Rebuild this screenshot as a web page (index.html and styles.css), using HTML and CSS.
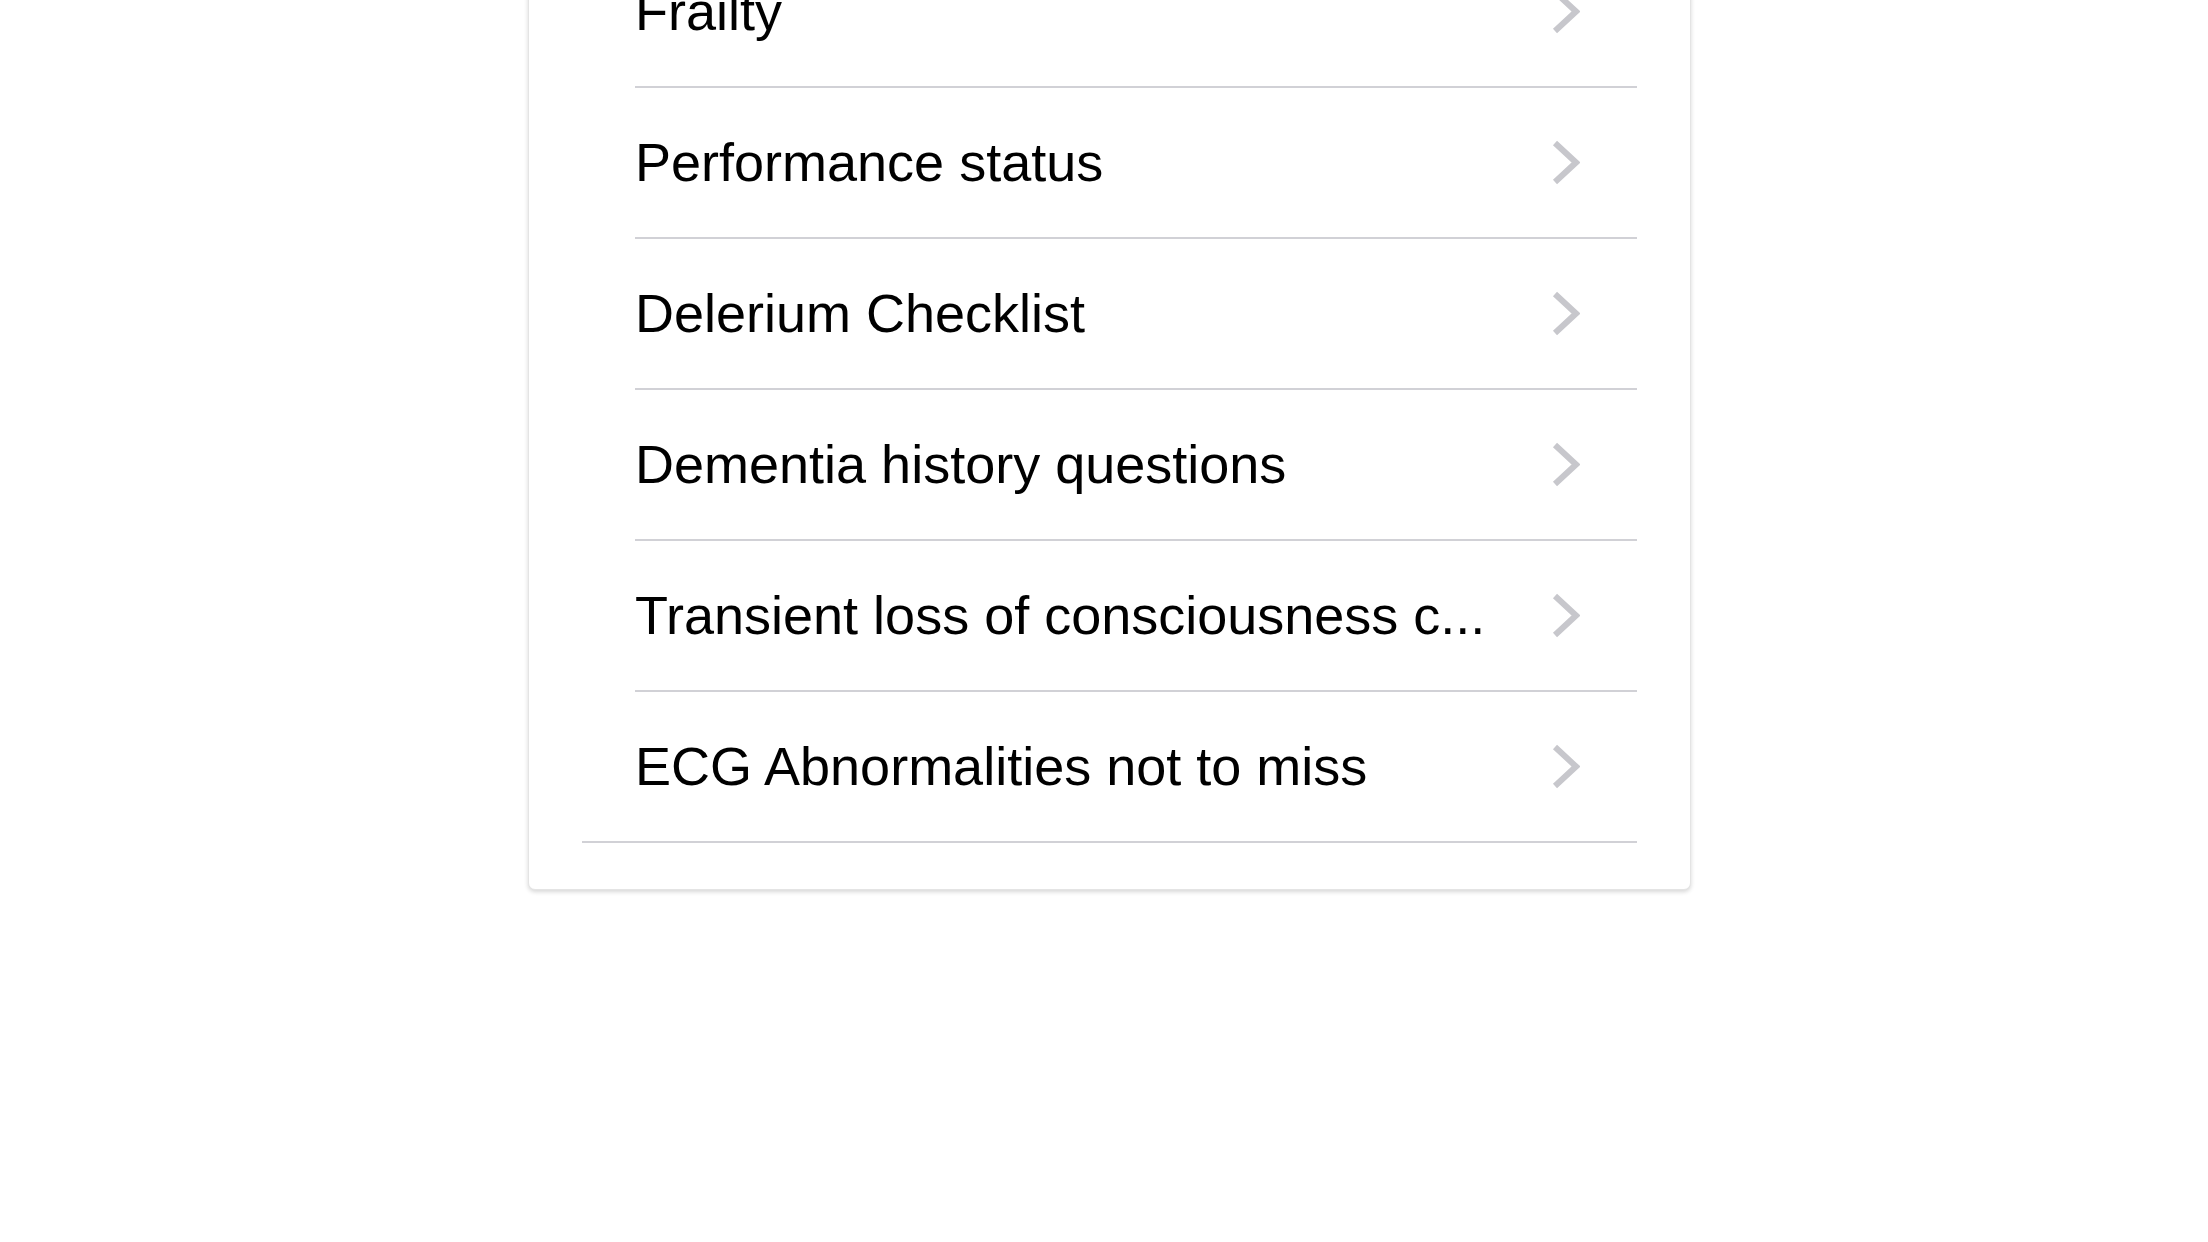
FILE: index.html
```html
<!DOCTYPE html>
<html lang="en">
<head>
<meta charset="utf-8">
<title>Checklists</title>
<link rel="stylesheet" href="styles.css">
</head>
<body>
<div class="card">
  <ul class="list">
    <li class="row"><span class="label">Frailty</span><svg class="chev" viewBox="0 0 28 45"><polyline points="3,3 24,22.5 3,42"/></svg></li>
    <li class="row"><span class="label">Performance status</span><svg class="chev" viewBox="0 0 28 45"><polyline points="3,3 24,22.5 3,42"/></svg></li>
    <li class="row"><span class="label">Delerium Checklist</span><svg class="chev" viewBox="0 0 28 45"><polyline points="3,3 24,22.5 3,42"/></svg></li>
    <li class="row"><span class="label">Dementia history questions</span><svg class="chev" viewBox="0 0 28 45"><polyline points="3,3 24,22.5 3,42"/></svg></li>
    <li class="row"><span class="label">Transient loss of consciousness c...</span><svg class="chev" viewBox="0 0 28 45"><polyline points="3,3 24,22.5 3,42"/></svg></li>
    <li class="row last"><span class="label">ECG Abnormalities not to miss</span><svg class="chev" viewBox="0 0 28 45"><polyline points="3,3 24,22.5 3,42"/></svg></li>
  </ul>
</div>
</body>
</html>
```

FILE: styles.css
```css
html, body {
  margin: 0;
  padding: 0;
  background: #ffffff;
  height: 100%;
  overflow: hidden;
}

body {
  font-family: "Liberation Sans", Arial, sans-serif;
  color: #000;
}

.card {
  width: 1055px;
  margin-left: 528px;
  margin-top: -100px;
  padding: 36px 53px 46px 53px;
  box-sizing: content-box;
  background: #fff;
  border: 1px solid #e4e4e4;
  border-radius: 0 0 7px 7px;
  box-shadow: 0 2px 4px rgba(0, 0, 0, 0.16);
}

.list {
  list-style: none;
  margin: 0;
  padding: 0;
}

.row {
  display: flex;
  align-items: center;
  justify-content: space-between;
  height: 149px;
  margin-left: 53px;
  border-bottom: 2px solid #d1d1d6;
}

.row.last {
  margin-left: 0;
  padding-left: 53px;
}

.label {
  font-size: 54px;
  line-height: 1;
  padding-bottom: 2px;
  white-space: nowrap;
}

.chev {
  width: 28px;
  height: 45px;
  margin-right: 57px;
  flex: none;
}

.chev polyline {
  fill: none;
  stroke: #c7c7cc;
  stroke-width: 6;
  stroke-linecap: butt;
  stroke-linejoin: miter;
}
```
